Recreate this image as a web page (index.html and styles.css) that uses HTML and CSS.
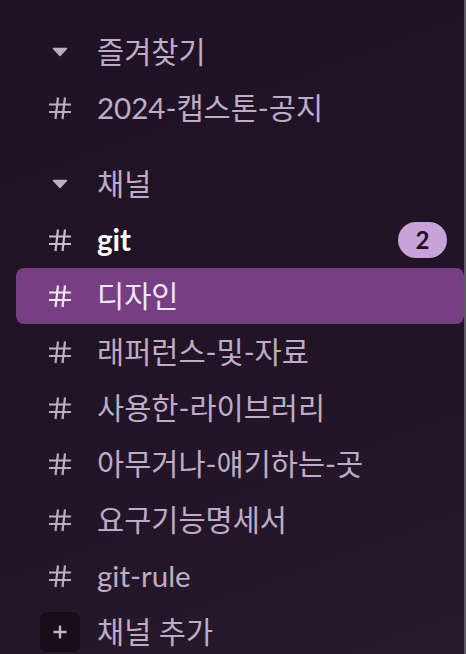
FILE: index.html
```html
<!DOCTYPE html>
<html lang="ko">
<head>
<meta charset="utf-8">
<link rel="stylesheet" href="styles.css">
</head>
<body>
<nav class="sidebar">
  <div class="section">
    <div class="row header">
      <span class="icon"><svg width="16" height="10" viewBox="0 0 16 10"><path d="M1.5 1.5h13l-6.5 7z" fill="currentColor" stroke="currentColor" stroke-width="1.5" stroke-linejoin="round"/></svg></span>
      <span class="label">즐겨찾기</span>
    </div>
    <div class="row">
      <span class="icon"><svg width="24" height="24" viewBox="0 0 24 24"><path d="M1 8.5h22M1 16h22M10 1.5 7.5 23M17 1.5 14.5 23" stroke="currentColor" stroke-width="2.2" fill="none"/></svg></span>
      <span class="label">2024-캡스톤-공지</span>
    </div>
  </div>
  <div class="section">
    <div class="row header">
      <span class="icon"><svg width="16" height="10" viewBox="0 0 16 10"><path d="M1.5 1.5h13l-6.5 7z" fill="currentColor" stroke="currentColor" stroke-width="1.5" stroke-linejoin="round"/></svg></span>
      <span class="label">채널</span>
    </div>
    <div class="row unread">
      <span class="icon"><svg width="24" height="24" viewBox="0 0 24 24"><path d="M1 8.5h22M1 16h22M10 1.5 7.5 23M17 1.5 14.5 23" stroke="currentColor" stroke-width="2.2" fill="none"/></svg></span>
      <span class="label">git</span>
      <span class="badge">2</span>
    </div>
    <div class="row active">
      <span class="icon"><svg width="24" height="24" viewBox="0 0 24 24"><path d="M1 8.5h22M1 16h22M10 1.5 7.5 23M17 1.5 14.5 23" stroke="currentColor" stroke-width="2.2" fill="none"/></svg></span>
      <span class="label">디자인</span>
    </div>
    <div class="row">
      <span class="icon"><svg width="24" height="24" viewBox="0 0 24 24"><path d="M1 8.5h22M1 16h22M10 1.5 7.5 23M17 1.5 14.5 23" stroke="currentColor" stroke-width="2.2" fill="none"/></svg></span>
      <span class="label">래퍼런스-및-자료</span>
    </div>
    <div class="row">
      <span class="icon"><svg width="24" height="24" viewBox="0 0 24 24"><path d="M1 8.5h22M1 16h22M10 1.5 7.5 23M17 1.5 14.5 23" stroke="currentColor" stroke-width="2.2" fill="none"/></svg></span>
      <span class="label">사용한-라이브러리</span>
    </div>
    <div class="row">
      <span class="icon"><svg width="24" height="24" viewBox="0 0 24 24"><path d="M1 8.5h22M1 16h22M10 1.5 7.5 23M17 1.5 14.5 23" stroke="currentColor" stroke-width="2.2" fill="none"/></svg></span>
      <span class="label">아무거나-얘기하는-곳</span>
    </div>
    <div class="row">
      <span class="icon"><svg width="24" height="24" viewBox="0 0 24 24"><path d="M1 8.5h22M1 16h22M10 1.5 7.5 23M17 1.5 14.5 23" stroke="currentColor" stroke-width="2.2" fill="none"/></svg></span>
      <span class="label">요구기능명세서</span>
    </div>
    <div class="row">
      <span class="icon"><svg width="24" height="24" viewBox="0 0 24 24"><path d="M1 8.5h22M1 16h22M10 1.5 7.5 23M17 1.5 14.5 23" stroke="currentColor" stroke-width="2.2" fill="none"/></svg></span>
      <span class="label">git-rule</span>
    </div>
    <div class="row add">
      <span class="icon"><span class="plus-box"><svg width="16" height="16" viewBox="0 0 16 16"><path d="M8 1.5v13M1.5 8h13" stroke="currentColor" stroke-width="2.4" fill="none"/></svg></span></span>
      <span class="label">채널 추가</span>
    </div>
  </div>
</nav>
</body>
</html>
```

FILE: styles.css
```css
html, body {
  margin: 0;
  padding: 0;
}

body {
  background: #201326;
  font-family: "Lato", "Noto Sans CJK KR", sans-serif;
}

.sidebar {
  box-sizing: border-box;
  width: 466px;
  height: 654px;
  overflow: hidden;
  padding: 24px 0 0 16px;
  border-right: 2px solid #5f5963;
  background: linear-gradient(160deg, #1f1225 0%, #211427 55%, #261a2c 100%);
  display: flex;
  flex-direction: column;
  gap: 20px;
}

.section {
  display: flex;
  flex-direction: column;
}

.row {
  display: flex;
  align-items: center;
  height: 56px;
  flex: none;
  padding: 0 17px 0 32px;
  border-radius: 8px;
  color: #bfacc6;
  font-size: 29.5px;
  line-height: 1;
}

.icon {
  width: 24px;
  height: 40px;
  flex: none;
  display: flex;
  align-items: center;
  justify-content: center;
  margin-right: 25px;
  color: #bdaec3;
}

.icon svg {
  display: block;
}

.label {
  flex: 1;
  white-space: nowrap;
  letter-spacing: 0;
}

.unread .label {
  color: #ffffff;
  font-weight: 700;
}

.unread .icon {
  color: #c8bccd;
}

.active {
  background: #763f82;
  color: #f1e6f3;
}

.active .icon {
  color: #f1e6f3;
}

.badge {
  flex: none;
  width: 49px;
  height: 36px;
  border-radius: 18px;
  background: #c8a3da;
  color: #1e1024;
  font-size: 24px;
  font-weight: 700;
  display: flex;
  align-items: center;
  justify-content: center;
}

.plus-box {
  width: 40px;
  height: 40px;
  flex: none;
  border-radius: 7px;
  background: #160d18;
  display: flex;
  align-items: center;
  justify-content: center;
  color: #c3b5c9;
}
```
